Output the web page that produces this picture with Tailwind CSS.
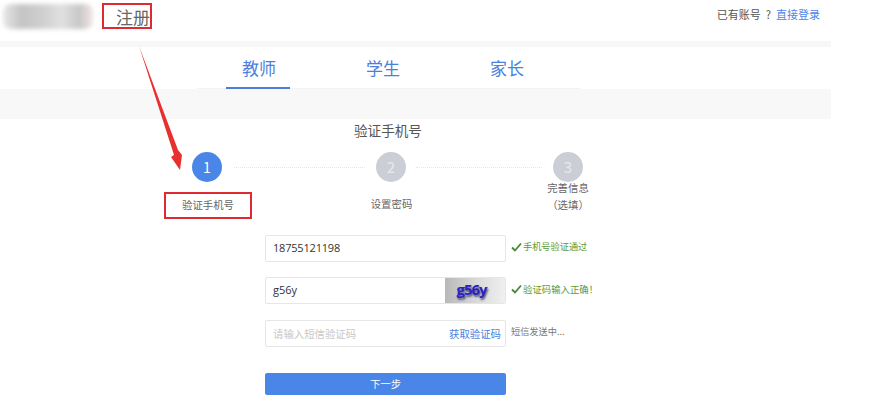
<!doctype html>
<html lang="zh"><head><meta charset="utf-8"><script src="https://cdn.jsdelivr.net/npm/@tailwindcss/browser@4"></script></head>
<body class="bg-white">
<div class="relative w-[872px] h-[404px] overflow-hidden bg-white font-['Noto_Sans_CJK_SC','Noto_Sans',sans-serif]">
  <div class="w-[831px]">
    <header class="h-[41px] flex items-center justify-between pl-[3px] pr-[11px]">
      <div class="flex items-center">
        <div class="w-[90px] h-[25px] mt-[-8px] bg-[linear-gradient(90deg,#e8e8e8_0%,#c4c4c4_20%,#d0d0d0_45%,#e0e0e0_65%,#c8c8c8_85%,#f5e5e5_100%)] rounded-[8px] blur-[2px]"></div>
        <div class="ml-[9px] mt-[-9px] w-[50px] h-[26px] border-2 border-[#e02a32] flex items-center justify-end pt-[1px] text-[17px] leading-none text-[#666]">注册</div>
      </div>
      <div class="mt-[-12px] text-[11px] text-[#555] flex"><span>已有账号</span><span class="ml-[5px] mr-[5px]">?</span><a class="text-[#4a86e8]">直接登录</a></div>
    </header>
    <div class="h-[6px] bg-[#f7f7f7]"></div>
    <nav class="ml-[197px] w-[383px] h-[42px] flex border-b border-[#f3f3f3] text-[17px] text-[#4a7fdc]">
      <div class="w-[124px] flex justify-center"><span class="w-[64px] h-[42px] pt-[7px] pl-[2px] text-center leading-[28px] border-b-2 border-[#4a7fdc] ml-[-2px]">教师</span></div>
      <div class="w-[124px] text-center pt-[7px] leading-[28px]">学生</div>
      <div class="w-[124px] text-center pt-[7px] leading-[28px]">家长</div>
    </nav>
    <div class="h-[30px] bg-[#f8f8f8]"></div>
    <h2 class="mt-[1px] h-[20px] pl-[354px] text-[13.6px] leading-[20px] font-normal text-[#555]">验证手机号</h2>
    <div class="mt-[12px] pl-[192px] flex items-center h-[30px]">
      <div class="w-[30px] h-[30px] rounded-full bg-[#4a86e8] text-white text-[14px] flex items-center justify-center">1</div>
      <div class="ml-[12px] mr-[11px] w-[131px] border-t border-dotted border-[#e6e6e6]"></div>
      <div class="w-[30px] h-[30px] rounded-full bg-[#ccced6] text-[#e8e8ec] text-[15px] flex items-center justify-center">2</div>
      <div class="ml-[10px] mr-[11px] w-[126px] border-t border-dotted border-[#e6e6e6]"></div>
      <div class="w-[30px] h-[30px] rounded-full bg-[#ccced6] text-[#e8e8ec] text-[15px] flex items-center justify-center">3</div>
    </div>
    <div class="pl-[164px] flex items-end h-[37px] text-[10.4px] text-[#666]">
      <div class="w-[88px] h-[27px] pb-[2px] border-2 border-[#e02a32] flex items-center justify-center">验证手机号</div>
      <div class="ml-[98px] w-[83px] h-[27px] pb-[3px] flex items-center justify-center">设置密码</div>
      <div class="ml-[95px] w-[80px] h-[34px] mb-[6px] text-center leading-[17px]">完善信息<br>（选填）</div>
    </div>
    <form class="mt-[16px] ml-[265px] text-[12px]">
      <div class="flex items-center h-[27px]">
        <div class="w-[241px] h-[27px] border border-[#e6e6e6] rounded-[2px] pl-[7px] flex items-center text-[11px] tracking-[-0.2px] text-[#333] font-['Open_Sans',sans-serif]">18755121198</div>
        <div class="ml-[5px] mt-[-3px] flex items-center text-[9.2px] text-[#5a9a36] whitespace-nowrap"><svg class="w-[11px] h-[10px] mr-[1px]" viewBox="0 0 11 10"><path d="M1 5.5 L4 8.5 L10 1.5" fill="none" stroke="#3f8a2f" stroke-width="1.8"/></svg>手机号验证通过</div>
      </div>
      <div class="mt-[15px] flex items-center h-[27px]">
        <div class="w-[241px] h-[27px] border border-[#e6e6e6] rounded-[2px] pl-[7px] flex items-center justify-between text-[11px] text-[#333] font-['Open_Sans',sans-serif]">g56y
          <div class="w-[60px] h-[25px] bg-[linear-gradient(90deg,#b8b8b8_0%,#d8d8d8_50%,#f0f0f0_100%)] flex items-center justify-center pb-[2px] pr-[7px] text-[15px] font-bold text-[#2a22c0] tracking-[-1px] [text-shadow:1px_2px_2px_#55557a]">g56y</div>
        </div>
        <div class="ml-[5px] mt-[-2px] flex items-center text-[9.4px] text-[#5a9a36] whitespace-nowrap"><svg class="w-[11px] h-[10px] mr-[1px]" viewBox="0 0 11 10"><path d="M1 5.5 L4 8.5 L10 1.5" fill="none" stroke="#3f8a2f" stroke-width="1.8"/></svg>验证码输入正确！</div>
      </div>
      <div class="mt-[16px] flex items-center h-[27px]">
        <div class="w-[241px] h-[27px] border border-[#e6e6e6] rounded-[2px] pl-[7px] pr-[4px] flex items-center justify-between text-[10.4px] text-[#c8c8c8]">请输入短信验证码<span class="text-[#4a7fdc] text-[10.4px]">获取验证码</span></div>
        <div class="ml-[5px] mt-[-4px] text-[9.2px] text-[#777] whitespace-nowrap">短信发送中...</div>
      </div>
      <button type="button" class="mt-[26px] block w-[241px] h-[22px] rounded-[2px] bg-[#4a86e8] text-white text-[10.4px]">下一步</button>
    </form>
  </div>
  <svg class="absolute left-0 top-0 pointer-events-none" width="872" height="404" viewBox="0 0 872 404">
    <path d="M139 46 L178 150 L182 155 L180 170 L171 157 L174 155 Z" fill="#e8312f"/>
  </svg>
</div>
</body></html>
